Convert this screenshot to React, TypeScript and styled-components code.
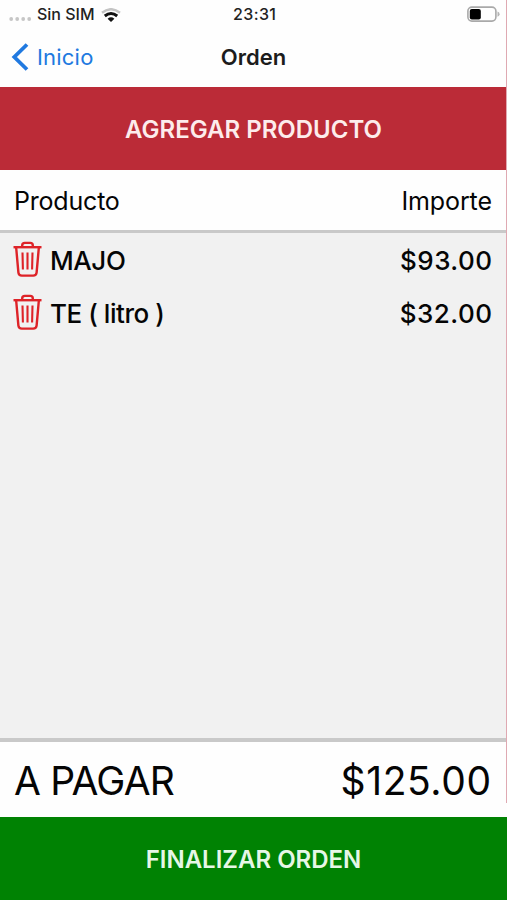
import React from 'react';
import styled, { createGlobalStyle } from 'styled-components';

const GlobalStyle = createGlobalStyle`
  * { box-sizing: border-box; }
  body { margin: 0; background: #fff; }
  button { font: inherit; border: 0; padding: 0; margin: 0; background: none; cursor: pointer; }
`;

const Screen = styled.div`
  position: relative;
  display: flex;
  flex-direction: column;
  width: 507px;
  height: 900px;
  overflow: hidden;
  background: #fefefe;
  color: #050505;
  font-family: Inter, 'Liberation Sans', sans-serif;
`;

const EdgeLine = styled.div`
  position: absolute;
  top: 0;
  right: 0;
  width: 1px;
  height: 803px;
  background: #dfa9b2;
`;

const Text = styled.span<{ $size: number; $weight?: number; $spacing?: number; $color?: string }>`
  font-size: ${(p) => p.$size}px;
  font-weight: ${(p) => p.$weight ?? 400};
  letter-spacing: ${(p) => p.$spacing ?? 0}px;
  margin-right: ${(p) => -(p.$spacing ?? 0)}px;
  color: ${(p) => p.$color ?? 'inherit'};
  line-height: 1;
  white-space: pre;
`;

const StatusBar = styled.header`
  display: grid;
  grid-template-columns: 1fr auto 1fr;
  align-items: center;
  height: 28px;
  padding: 0 7px 0 9px;
`;

const Carrier = styled.div`
  display: flex;
  align-items: center;
`;

const SignalDots = styled.svg`
  width: 23px;
  height: 6px;
  margin: 9px 5px 0 0;
`;

const WifiIcon = styled.svg`
  width: 20px;
  height: 15px;
  margin: 2px 0 0 6px;
`;

const BatteryIcon = styled.svg`
  width: 34px;
  height: 18px;
  justify-self: end;
`;

const NavBar = styled.nav`
  display: grid;
  grid-template-columns: 1fr auto 1fr;
  align-items: center;
  height: 59px;
  padding: 0 11px 2px;
`;

const BackButton = styled.button`
  display: flex;
  align-items: center;
  gap: 8px;
  color: #2079e0;
`;

const BackIcon = styled.svg`
  width: 18px;
  height: 30px;
`;

const ActionButton = styled.button<{ $bg: string }>`
  display: flex;
  align-items: center;
  justify-content: center;
  flex: none;
  height: 83px;
  padding-top: 2px;
  background: ${(p) => p.$bg};
`;

const TableHeader = styled.div`
  display: flex;
  justify-content: space-between;
  align-items: center;
  height: 63px;
  padding: 2px 15px 0 14px;
  border-bottom: 3px solid #c9c9c9;
`;

const ItemList = styled.ul`
  flex: 1;
  margin: 0;
  padding: 0;
  list-style: none;
  background: #f1f1f1;
`;

const ItemRow = styled.li`
  display: flex;
  align-items: center;
  height: 53px;
  padding: 2px 15px 0 13px;
`;

const DeleteButton = styled.button`
  display: flex;
  margin: -3px 8px 0 0;
`;

const TrashSvg = styled.svg`
  width: 29px;
  height: 36px;
`;

const Amount = styled.div`
  margin-left: auto;
  display: flex;
`;

const TotalRow = styled.div`
  display: flex;
  justify-content: space-between;
  align-items: center;
  height: 79px;
  padding: 2px 16px 0 14px;
  border-top: 4px solid #c9c9c9;
`;

const TrashIcon = () => (
  <TrashSvg viewBox="0 0 29 36" fill="none" stroke="#de2328" strokeWidth="2.4" strokeLinejoin="round">
    <path d="M0.5 6.2H28.5" />
    <path d="M9.2 6V4.4Q9.2 1.9 11.8 1.9H17.2Q19.8 1.9 19.8 4.4V6" />
    <path d="M3.2 7L5.4 31.6Q5.8 34.6 8.8 34.6H20.2Q23.2 34.6 23.6 31.6L25.8 7" />
    <path d="M9.5 11.5L9.9 28.6M14.5 11.5V28.6M19.5 11.5L19.1 28.6" strokeWidth="2.1" />
  </TrashSvg>
);

const items = [
  { name: 'MAJO', price: '$93.00', nameSpacing: -0.4 },
  { name: 'TE ( litro )', price: '$32.00', nameSpacing: -0.45 },
];

export default function App() {
  return (
    <>
      <GlobalStyle />
      <Screen>
        <StatusBar>
          <Carrier>
            <SignalDots viewBox="0 0 23 6" fill="#c6c6c6">
              <circle cx="2.2" cy="3" r="1.9" />
              <circle cx="8.2" cy="3" r="1.9" />
              <circle cx="14.2" cy="3" r="1.9" />
              <circle cx="20.2" cy="3" r="1.9" />
            </SignalDots>
            <Text $size={16} $weight={500} $color="#222">Sin SIM</Text>
            <WifiIcon viewBox="0 0 20 15" fill="none">
              <path d="M1 4.8Q10 -2.4 19 4.8" stroke="#c4c4c4" strokeWidth="2.4" />
              <path d="M3.8 8Q10 2.9 16.2 8" stroke="#111" strokeWidth="3" />
              <path d="M6.6 10.7Q10 7.8 13.4 10.7L10 14Z" fill="#111" />
            </WifiIcon>
          </Carrier>
          <Text $size={16} $weight={500} $spacing={0.4} $color="#222">23:31</Text>
          <BatteryIcon viewBox="0 0 34 18">
            <rect x="1.9" y="2.1" width="28" height="14" rx="4" fill="#fff" stroke="#a9a9a9" strokeWidth="1.6" />
            <rect x="3.8" y="4" width="11" height="10.4" rx="2" fill="#000" />
            <path d="M31.5 6.5Q33.6 7.3 33.6 9.2Q33.6 11 31.5 11.8Z" fill="#b5b5b5" />
          </BatteryIcon>
        </StatusBar>
        <NavBar>
          <BackButton>
            <BackIcon viewBox="0 0 18 30" fill="none" stroke="#2079e0" strokeWidth="3.8">
              <path d="M16 2.5L3.3 15L16 27.5" />
            </BackIcon>
            <Text $size={22} $spacing={0.2}>Inicio</Text>
          </BackButton>
          <Text $size={22} $weight={600} $color="#1c1c1c">Orden</Text>
        </NavBar>
        <ActionButton $bg="#bb2b37">
          <Text $size={24} $weight={600} $color="#fdecec">AGREGAR PRODUCTO</Text>
        </ActionButton>
        <TableHeader>
          <Text $size={25} $spacing={-0.2}>Producto</Text>
          <Text $size={25} $spacing={-0.1}>Importe</Text>
        </TableHeader>
        <ItemList>
          {items.map((item) => (
            <ItemRow key={item.name}>
              <DeleteButton aria-label="Eliminar">
                <TrashIcon />
              </DeleteButton>
              <Text $size={26} $weight={450} $spacing={item.nameSpacing}>{item.name}</Text>
              <Amount>
                <Text $size={26} $weight={450} $spacing={0.45}>{item.price}</Text>
              </Amount>
            </ItemRow>
          ))}
        </ItemList>
        <TotalRow>
          <Text $size={39} $spacing={-0.8}>A PAGAR</Text>
          <Text $size={39} $spacing={0.6}>$125.00</Text>
        </TotalRow>
        <ActionButton $bg="#008203">
          <Text $size={24} $weight={600} $color="#e6f7e6">FINALIZAR ORDEN</Text>
        </ActionButton>
        <EdgeLine />
      </Screen>
    </>
  );
}
